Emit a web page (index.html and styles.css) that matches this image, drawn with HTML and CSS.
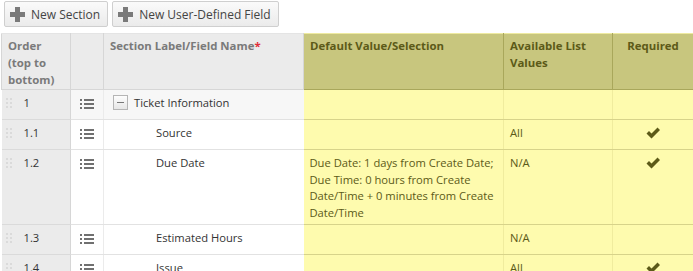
FILE: index.html
```html
<!DOCTYPE html>
<html lang="en">
<head>
    <meta charset="UTF-8">
    <title>Ticket Fields</title>
    <link rel="stylesheet" href="styles.css">
</head>
<body>

<div class="toolbar">
    <button class="btn"><span class="plus"></span>New Section</button>
    <button class="btn"><span class="plus"></span>New User-Defined Field</button>
</div>

<table class="fields">
    <colgroup>
        <col class="c-order">
        <col class="c-icon">
        <col class="c-label">
        <col class="c-default">
        <col class="c-list">
        <col class="c-req">
    </colgroup>
    <thead>
        <tr>
            <th>Order (top to bottom)</th>
            <th></th>
            <th>Section Label/Field Name<span class="star">*</span></th>
            <th class="hl">Default Value/Selection</th>
            <th class="hl">Available List Values</th>
            <th class="hl center">Required</th>
        </tr>
    </thead>
    <tbody>
        <tr class="section">
            <td class="order"><span class="grip"></span>1</td>
            <td class="icon"><span class="list-ico"></span></td>
            <td class="label"><span class="toggle"></span>Ticket Information</td>
            <td class="hl"></td>
            <td class="hl"></td>
            <td class="hl"></td>
        </tr>
        <tr>
            <td class="order"><span class="grip"></span>1.1</td>
            <td class="icon"><span class="list-ico"></span></td>
            <td class="label child">Source</td>
            <td class="hl"></td>
            <td class="hl">All</td>
            <td class="hl center"><svg class="check" width="14" height="12" viewBox="0 0 14 12"><path d="M0.5 6.5 L3 4 L5.5 6.5 L11.5 0.5 L14 3 L5.5 11.5 Z"/></svg></td>
        </tr>
        <tr>
            <td class="order"><span class="grip"></span>1.2</td>
            <td class="icon"><span class="list-ico"></span></td>
            <td class="label child">Due Date</td>
            <td class="hl">Due Date: 1 days from Create Date; Due Time: 0 hours from Create Date/Time + 0 minutes from Create Date/Time</td>
            <td class="hl">N/A</td>
            <td class="hl center"><svg class="check" width="14" height="12" viewBox="0 0 14 12"><path d="M0.5 6.5 L3 4 L5.5 6.5 L11.5 0.5 L14 3 L5.5 11.5 Z"/></svg></td>
        </tr>
        <tr>
            <td class="order"><span class="grip"></span>1.3</td>
            <td class="icon"><span class="list-ico"></span></td>
            <td class="label child">Estimated Hours</td>
            <td class="hl"></td>
            <td class="hl">N/A</td>
            <td class="hl"></td>
        </tr>
        <tr>
            <td class="order"><span class="grip"></span>1.4</td>
            <td class="icon"><span class="list-ico"></span></td>
            <td class="label child">Issue</td>
            <td class="hl"></td>
            <td class="hl">All</td>
            <td class="hl center"><svg class="check" width="14" height="12" viewBox="0 0 14 12"><path d="M0.5 6.5 L3 4 L5.5 6.5 L11.5 0.5 L14 3 L5.5 11.5 Z"/></svg></td>
        </tr>
    </tbody>
</table>

</body>
</html>
```

FILE: styles.css
```css
* {
    box-sizing: border-box;
}
body {
    margin: 0;
    padding: 1px 0 0 1px;
    font-family: "Open Sans", Arial, sans-serif;
    font-size: 11.2px;
    color: #333;
    background: #fff;
}
.toolbar {
    display: flex;
    gap: 4px;
    padding-left: 3px;
    margin-bottom: 6px;
}
.btn {
    display: flex;
    align-items: center;
    height: 26px;
    padding: 0 7px 0 5px;
    font-family: inherit;
    font-size: 12px;
    color: #444;
    background: linear-gradient(#fafafa, #ebebeb);
    border: 1px solid #cfcfcf;
    border-radius: 2px;
}
.plus {
    position: relative;
    width: 15px;
    height: 15px;
    margin-right: 6px;
}
.plus::before,
.plus::after {
    content: "";
    position: absolute;
    background: #7a7a7a;
}
.plus::before {
    left: 5px;
    top: 0;
    width: 5px;
    height: 15px;
}
.plus::after {
    left: 0;
    top: 5px;
    width: 15px;
    height: 5px;
}
.fields {
    border-collapse: collapse;
    table-layout: fixed;
    width: 692px;
}
.c-order { width: 69px; }
.c-icon { width: 33px; }
.c-label { width: 200px; }
.c-default { width: 200px; }
.c-list { width: 109px; }
.c-req { width: 81px; }
th {
    background: #ebebeb;
    color: #7a7a7a;
    font-size: 11.4px;
    font-weight: bold;
    text-align: left;
    vertical-align: top;
    padding: 3px 6px 1px;
    height: 52px;
    line-height: 17px;
    border: 1px solid #d6d6d6;
    border-top-color: #e4e4e4;
}
th.hl {
    background: #c8c67e;
    color: #5c5a18;
    border: 1px solid #a9a75b;
    border-top-color: #eeeaa0;
}
th.center {
    text-align: center;
}
.star {
    color: #e0303a;
}
td {
    vertical-align: top;
    height: 30px;
    padding: 5px 6px 2px;
    line-height: 16.7px;
    border-bottom: 1px solid #e2e2e2;
    background: #fff;
}
td.order {
    background: #ebebeb;
    border-right: 1px solid #d6d6d6;
    border-bottom-color: #dadada;
    padding-left: 4px;
}
td.icon {
    padding-left: 9px;
    border-right: 1px solid #ebebeb;
}
tr.section td.label,
tr.section td.icon {
    background: #f7f7f7;
}
td.hl {
    background: #fefbae;
    color: #5c5a18;
    border-bottom: 1px solid #d7d38a;
    border-right: 1px solid #f0ec9e;
}
td.center {
    text-align: center;
}
.grip {
    display: inline-block;
    width: 6px;
    height: 10px;
    margin-right: 12px;
    vertical-align: -1px;
    background-image: linear-gradient(#dadada 2px, transparent 2px);
    background-size: 4px 4px;
    -webkit-mask: linear-gradient(90deg, #000 2px, transparent 2px) 0 0 / 4px 4px;
    mask: linear-gradient(90deg, #000 2px, transparent 2px) 0 0 / 4px 4px;
}
.list-ico {
    display: inline-block;
    width: 14px;
    height: 10px;
    margin-top: 4px;
    background:
        linear-gradient(#707070, #707070) 0 0 / 2px 2px no-repeat,
        linear-gradient(#707070, #707070) 0 4px / 2px 2px no-repeat,
        linear-gradient(#707070, #707070) 0 8px / 2px 2px no-repeat,
        linear-gradient(#707070, #707070) 4px 0 / 10px 2px no-repeat,
        linear-gradient(#707070, #707070) 4px 4px / 10px 2px no-repeat,
        linear-gradient(#707070, #707070) 4px 8px / 10px 2px no-repeat;
}
td.label {
    color: #333;
    padding-left: 9px;
}
td.child {
    padding-left: 52px;
}
.toggle {
    display: inline-block;
    position: relative;
    width: 15px;
    height: 15px;
    margin-right: 6px;
    vertical-align: -3px;
    border: 1px solid #b5b5b5;
    background: linear-gradient(#fdfdfd, #e6e6e6);
}
.toggle::after {
    content: "";
    position: absolute;
    left: 3px;
    top: 6px;
    width: 7px;
    height: 1px;
    background: #777;
}
.check {
    display: inline-block;
    margin-top: 2px;
    fill: #5c5a18;
}
```
